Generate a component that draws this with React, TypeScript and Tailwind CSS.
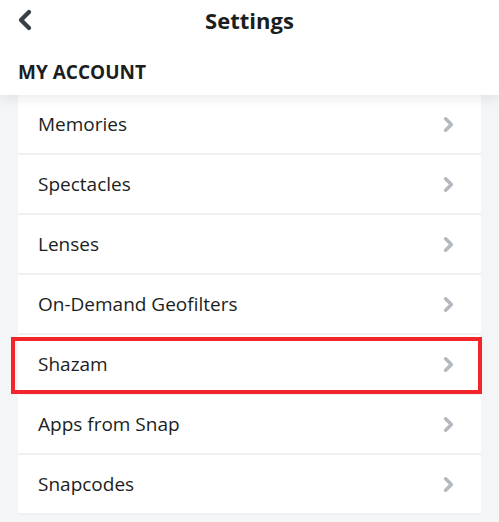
import { ChevronLeft, ChevronRight } from 'lucide-react';

const items = [
  'Memories',
  'Spectacles',
  'Lenses',
  'On-Demand Geofilters',
  'Shazam',
  'Apps from Snap',
  'Snapcodes',
];

const App = () => {
  return (
    <div className="h-[522px] w-[499px] overflow-hidden bg-[#f4f5f7] font-['Open_Sans',sans-serif] text-[#1b1e21]">
      <div className="relative z-10 bg-white shadow-[0_4px_12px_rgba(0,0,0,0.08)]">
        <div className="relative flex h-[40px] items-center justify-center">
          <ChevronLeft
            className="absolute left-[9px] top-[4px] text-[#3a3f45]"
            size={32}
            strokeWidth={3.2}
          />
          <div className="text-[22px] font-bold">Settings</div>
        </div>
        <div className="flex h-[55px] items-center px-[18px] pt-[10px] text-[19px] font-bold">
          MY ACCOUNT
        </div>
      </div>

      <div className="mx-[18px] bg-white">
        {items.map(item => (
          <div
            key={item}
            className={
              item === 'Shazam'
                ? 'relative flex h-[60px] items-center justify-between border-b-2 border-[#eff0f2] pl-[20px] pr-[21px]'
                : 'flex h-[60px] items-center justify-between border-b-2 border-[#eff0f2] pl-[20px] pr-[21px]'
            }
          >
            <span className="text-[19px]">{item}</span>
            <ChevronRight
              className="text-[#b4b8bf]"
              size={23}
              strokeWidth={3.6}
            />
            {item === 'Shazam' && (
              <div className="absolute -left-[7px] right-[-1px] top-[2px] bottom-[-1px] border-[4px] border-[#f2252b]" />
            )}
          </div>
        ))}
      </div>
    </div>
  );
};

export default App;
